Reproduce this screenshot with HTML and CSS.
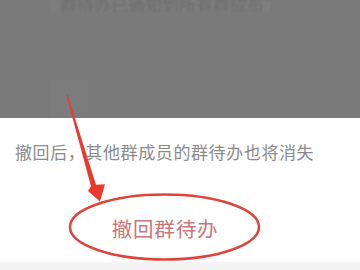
FILE: index.html
```html
<!DOCTYPE html>
<html>
<head>
	<title>撤回群待办</title>
	<link rel="stylesheet" href="styles.css">
</head>
<body>
	<div class="screen">
		<div class="backdrop">
			<div class="ghost-line"><span>群待办已通知到所有群成员了</span></div>
			<div class="ghost-box"></div>
		</div>
		<div class="sheet">
			<p class="notice">撤回后，其他群成员的群待办也将消失</p>
			<div class="action">撤回群待办</div>
		</div>
		<div class="strip"></div>

		<!-- annotation drawn over the screenshot -->
		<svg class="marks" width="360" height="270" viewBox="0 0 360 270">
			<ellipse cx="164.5" cy="227" rx="94.5" ry="32.5" fill="none" stroke="#df4339" stroke-width="2.5"/>
			<path d="M66.3 95 L67.7 95 L96 184.8 L105 184.3 L100 201.5 L88 191 L91 186.2 Z" fill="#ea3a30"/>
		</svg>
	</div>
</body>
</html>
```

FILE: styles.css
```css
html, body {
	margin: 0px;
	padding: 0px;
}
body {
	background-color: #ffffff;
	font-family: "Noto Sans CJK SC", "Noto Sans", sans-serif;
}
* {
	box-sizing: border-box;
}
.screen {
	position: relative;
	width: 360px;
	height: 270px;
	overflow: hidden;
	display: flex;
	flex-direction: column;
}
.backdrop {
	height: 118px;
	background-color: #7a7a7a;
	display: flex;
	flex-direction: column;
}
.ghost-line {
	margin-left: 50px;
	width: 222px;
	height: 12px;
	background-color: #7d7d7d;
	overflow: hidden;
	display: flex;
	align-items: flex-end;
	padding-left: 10px;
}
.ghost-line span {
	font-size: 17px;
	line-height: 15px;
	color: #6d6d6d;
	white-space: nowrap;
	filter: blur(0.8px);
}
.ghost-box {
	margin-left: 50px;
	margin-top: 68px;
	width: 38px;
	height: 38px;
	background-color: #7c7c7c;
}
.sheet {
	height: 144px;
	background-color: #ffffff;
	display: flex;
	flex-direction: column;
}
.notice {
	margin: 0px;
	padding: 22px 0px 0px 15px;
	font-size: 17px;
	line-height: 24px;
	letter-spacing: 0.6px;
	color: #8a8a8a;
}
.action {
	margin-top: 50px;
	margin-left: 69px;
	width: 191px;
	padding-left: 1px;
	text-align: center;
	font-size: 20.5px;
	line-height: 28px;
	letter-spacing: 0.8px;
	color: #c9767c;
}
.strip {
	flex: 1;
	background-color: #f4f4f4;
}
.marks {
	position: absolute;
	top: 0px;
	left: 0px;
}
```
